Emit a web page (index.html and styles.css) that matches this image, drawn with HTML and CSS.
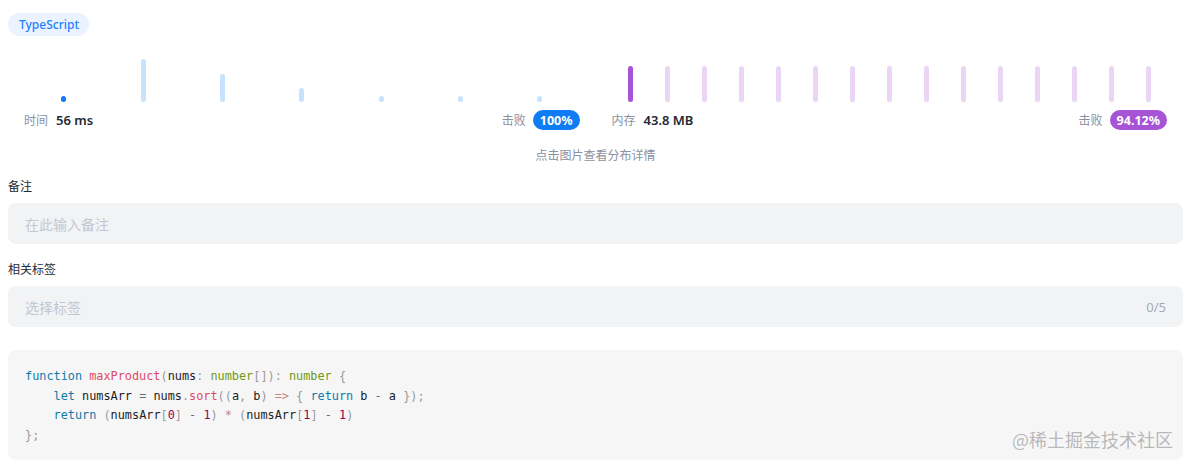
FILE: index.html
```html
<!DOCTYPE html>
<html lang="zh-CN">
<head>
<meta charset="utf-8">
<title>Submission</title>
<link rel="stylesheet" href="styles.css">
</head>
<body>
<div class="page">
  <div class="tag">TypeScript</div>

  <div class="stats">
    <div class="stat">
      <div class="chart">
        <span class="bar bar-time-active" style="height:6px"></span>
        <span class="bar bar-time" style="height:43px"></span>
        <span class="bar bar-time" style="height:28px"></span>
        <span class="bar bar-time" style="height:14px"></span>
        <span class="bar bar-time" style="height:6px"></span>
        <span class="bar bar-time" style="height:6px"></span>
        <span class="bar bar-time" style="height:6px"></span>
      </div>
      <div class="meta">
        <span class="meta-label">时间</span>
        <span class="meta-value">56 ms</span>
        <span class="meta-label beat">击败</span>
        <span class="badge badge-blue">100%</span>
      </div>
    </div>
    <div class="stat">
      <div class="chart">
        <span class="bar bar-mem-active" style="height:36px"></span>
        <span class="bar bar-mem" style="height:36px"></span>
        <span class="bar bar-mem" style="height:36px"></span>
        <span class="bar bar-mem" style="height:36px"></span>
        <span class="bar bar-mem" style="height:36px"></span>
        <span class="bar bar-mem" style="height:36px"></span>
        <span class="bar bar-mem" style="height:36px"></span>
        <span class="bar bar-mem" style="height:36px"></span>
        <span class="bar bar-mem" style="height:36px"></span>
        <span class="bar bar-mem" style="height:36px"></span>
        <span class="bar bar-mem" style="height:36px"></span>
        <span class="bar bar-mem" style="height:36px"></span>
        <span class="bar bar-mem" style="height:36px"></span>
        <span class="bar bar-mem" style="height:36px"></span>
        <span class="bar bar-mem" style="height:36px"></span>
      </div>
      <div class="meta">
        <span class="meta-label">内存</span>
        <span class="meta-value">43.8 MB</span>
        <span class="meta-label beat">击败</span>
        <span class="badge badge-purple">94.12%</span>
      </div>
    </div>
  </div>

  <div class="hint">点击图片查看分布详情</div>

  <div class="field-label">备注</div>
  <div class="input"><span class="placeholder">在此输入备注</span></div>

  <div class="field-label label-gap">相关标签</div>
  <div class="input select"><span class="placeholder">选择标签</span><span class="count">0/5</span></div>

  <div class="code-wrap">
<pre class="code"><span class="kw">function</span> <span class="fn">maxProduct</span><span class="p">(</span>nums<span class="p">:</span> <span class="bi">number</span><span class="p">[</span><span class="p">]</span><span class="p">)</span><span class="p">:</span> <span class="bi">number</span> <span class="p">{</span>
    <span class="kw">let</span> numsArr <span class="op">=</span> nums<span class="p">.</span><span class="fn">sort</span><span class="p">(</span><span class="p">(</span>a<span class="p">,</span> b<span class="p">)</span> <span class="op2">=&gt;</span> <span class="p">{</span> <span class="kw">return</span> b <span class="op">-</span> a <span class="p">}</span><span class="p">)</span><span class="p">;</span>
    <span class="kw">return</span> <span class="p">(</span>numsArr<span class="p">[</span><span class="num">0</span><span class="p">]</span> <span class="op">-</span> <span class="num">1</span><span class="p">)</span> <span class="op2">*</span> <span class="p">(</span>numsArr<span class="p">[</span><span class="num">1</span><span class="p">]</span> <span class="op">-</span> <span class="num">1</span><span class="p">)</span>
<span class="p">}</span><span class="p">;</span></pre>
    <div class="watermark">@稀土掘金技术社区</div>
  </div>
</div>
</body>
</html>
```

FILE: styles.css
```css
* { box-sizing: border-box; }
html, body { margin: 0; padding: 0; background: #fff; }
body {
  font-family: "Noto Sans", "Noto Sans CJK SC", sans-serif;
  color: #252933;
}
.page {
  padding: 12px 6px 0 8px;
}
.tag {
  display: inline-flex;
  align-items: center;
  height: 23px;
  padding: 0 10px 0 11px;
  border-radius: 12px;
  background: #eaf3ff;
  color: #1e80ff;
  font-size: 12px;
  font-weight: 500;
}
.stats {
  display: flex;
  gap: 32px;
  padding: 0 16px;
  margin-top: 10px;
}
.stat { flex: 1; min-width: 0; }
.chart {
  display: flex;
  justify-content: space-around;
  align-items: flex-end;
  height: 56px;
}
.bar {
  display: block;
  width: 5px;
  border-radius: 3px;
}
.bar-time { background: #c7e2fd; }
.bar-time-active { background: #0f7bf5; }
.bar-mem { background: #ead6f4; }
.bar-mem-active { background: #a653d6; }
.meta {
  display: flex;
  align-items: center;
  height: 20px;
  margin-top: 8px;
  font-size: 12px;
}
.meta-label { color: #8a919f; }
.meta-value {
  margin-left: 8px;
  font-size: 13px;
  font-weight: 600;
  color: #252933;
}
.beat { margin-left: auto; }
.badge {
  margin-left: 7px;
  height: 20px;
  padding: 0 7px;
  border-radius: 10px;
  display: inline-flex;
  align-items: center;
  color: #fff;
  font-size: 12.5px;
  font-weight: 700;
}
.badge-blue { background: #0f7bf5; }
.badge-purple { background: #a653d6; }
.hint {
  text-align: center;
  font-size: 12px;
  line-height: 18px;
  color: #8a919f;
  margin-top: 17px;
}
.field-label {
  font-size: 12px;
  line-height: 20px;
  color: #252933;
  margin-top: 12px;
}
.label-gap { margin-top: 16px; }
.input {
  margin-top: 6px;
  height: 41px;
  background: #f2f3f5;
  border-radius: 8px;
  display: flex;
  align-items: center;
  padding: 0 17px;
  font-size: 14px;
}
.placeholder { color: #c2c8d1; }
.select { justify-content: space-between; }
.count { color: #a5abb5; font-size: 13px; }
.code-wrap {
  position: relative;
  margin-top: 23px;
  background: #f6f6f7;
  border-radius: 8px;
  padding: 17px 17px 15px;
  height: 110px;
}
.code {
  margin: 0;
  font-family: "DejaVu Sans Mono", "Liberation Mono", monospace;
  font-size: 11.85px;
  line-height: 19.5px;
  color: #1d1d1f;
}
.kw { color: #0f7aa8; }
.fn { color: #dd4a68; }
.bi { color: #6f9a14; }
.p { color: #999; }
.op { color: #6b6b6b; }
.op2 { color: #c08a86; }
.num { color: #990055; }
.watermark {
  position: absolute;
  right: 10px;
  bottom: 9px;
  font-family: "Noto Sans CJK SC", sans-serif;
  font-size: 18px;
  line-height: 24px;
  color: rgba(130,130,130,0.55);
}
```
